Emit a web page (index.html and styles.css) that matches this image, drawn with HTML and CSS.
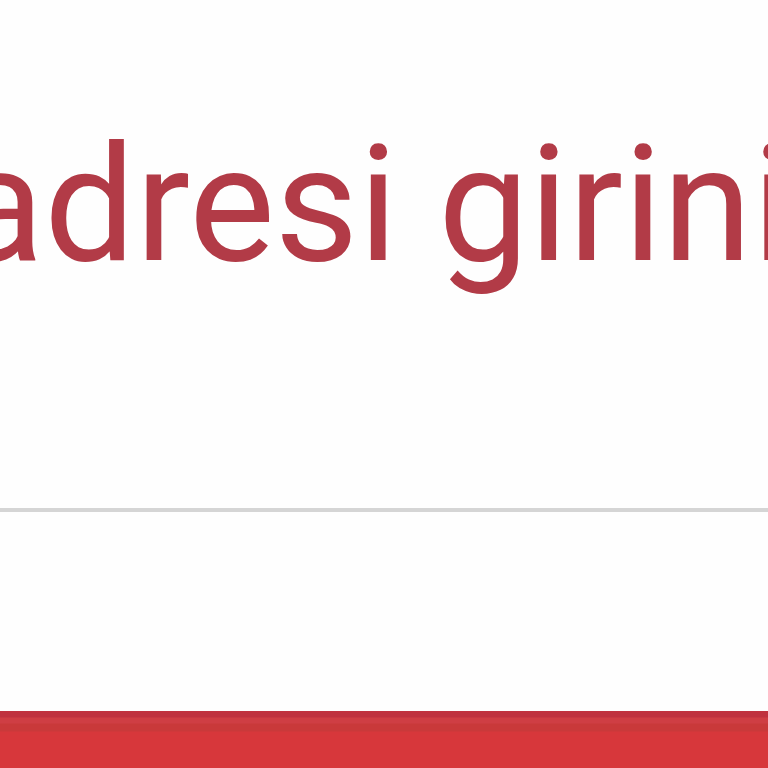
FILE: index.html
```html
<!DOCTYPE html>
<html lang="tr">
<head>
<meta charset="utf-8">
<title>E-posta</title>
<link rel="stylesheet" href="styles.css">
</head>
<body>
<div class="page">
  <div class="error-text">adresi giriniz</div>
  <div class="divider"></div>
  <div class="spacer"></div>
  <div class="red-bar"></div>
</div>
</body>
</html>
```
FILE: styles.css
```css
html, body {
  margin: 0;
  padding: 0;
  background: #fefefe;
  overflow: hidden;
}
.page {
  width: 768px;
  height: 768px;
  display: flex;
  flex-direction: column;
  overflow: hidden;
}
.error-text {
  font-family: Roboto, "Noto Sans", sans-serif;
  font-size: 162px;
  line-height: 162px;
  padding-top: 124px;
  margin-left: -44px;
  white-space: nowrap;
  color: #b23b47;
  height: 162px;
}
.divider {
  margin-top: 222px;
  height: 4px;
  background: #d5d5d5;
  flex: none;
}
.spacer {
  flex: 1;
}
.red-bar {
  height: 57px;
  flex: none;
  background: linear-gradient(to bottom, #c0323f 0px, #c0323f 6px, #cf3e44 7px, #cf3e44 12px, #c9393a 13px, #c9393a 20px, #d7373b 21px);
}
```
